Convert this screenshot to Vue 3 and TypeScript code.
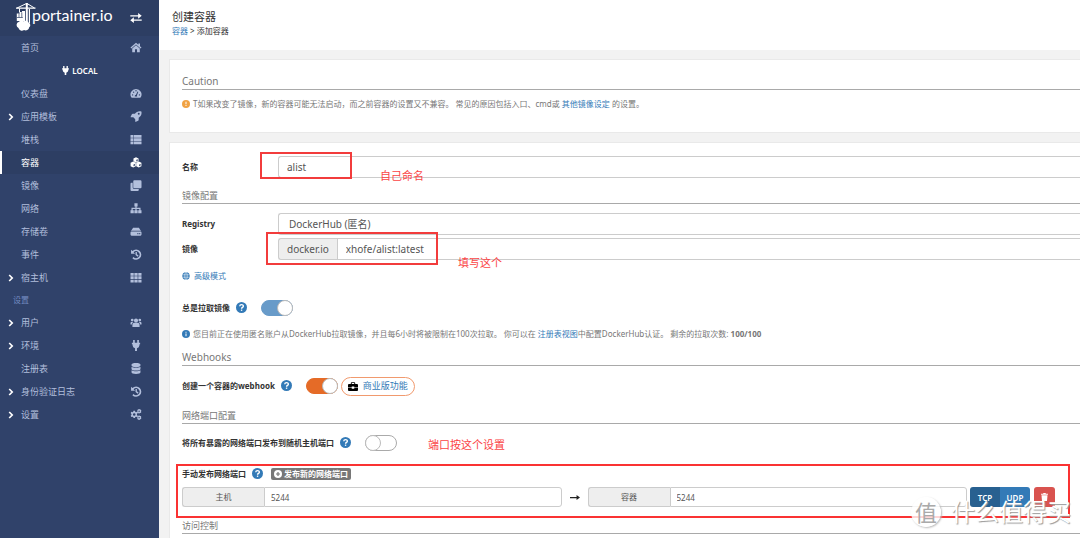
<script setup lang="ts">
import { ref } from 'vue'

interface NavItem {
  label: string
  icon?: string
  expandable?: boolean
  active?: boolean
  heading?: boolean
}

const icons: Record<string, string> = {
  home: 'M8 1 0 8l1.200 1.400L8 3.500l6.800 5.900L16 8l-2.200-1.900V2h-2.300v2.100zM8 4.700 2.500 9.500V15h4v-4.500h3V15h4V9.500z',
  gauge:
    'M8 1.500a8 8 0 0 0-6.900 12.100c.2.3.5.4.8.4h12.200c.3 0 .6-.1.8-.4A8 8 0 0 0 8 1.500zM8 3a1 1 0 1 1 0 2 1 1 0 0 1 0-2zM3 11a1 1 0 1 1 0-2 1 1 0 0 1 0 2zm1.500-4a1 1 0 1 1 0-2 1 1 0 0 1 0 2zm6.800-1.100-2 4.900c.4.4.4 1 .3 1.700H6.300c-.4-1.200.4-2.200 1.500-2.300l2.300-4.800c.3-.6 1.400-.1 1.200.5zM13 11a1 1 0 1 1 0-2 1 1 0 0 1 0 2z',
  rocket:
    'M15.800.6c-4-1.100-7.200.4-9.400 3.500H3.200c-.5 0-1 .3-1.200.7L.2 8.300c-.2.5 0 .8.5.8h3.400l2.800 2.800v3.300c0 .6.5.8.9.6l3.400-1.800c.5-.2.7-.6.7-1.100V9.700c3.100-2.200 4.900-5.100 3.900-9.100zM12 5.500a1.400 1.400 0 1 1 0-2.800 1.400 1.400 0 0 1 0 2.800z',
  list: 'M0 1.500h4v4H0zM4.700 1.500H16v4H4.700zM0 6.200h4v4H0zM4.700 6.200H16v4H4.700zM0 10.900h4v4H0zM4.700 10.900H16v4H4.700z',
  cubes:
    'M8 .3 4.300 2v4.200L8 8l3.700-1.800V2zM3.900 6.700.1 8.500v4.800l3.800 1.900 3.800-1.900V8.500zM12.100 6.700 8.300 8.500v4.800l3.800 1.900 3.800-1.900V8.500zM8.500 6.500V4l2-.9v2.400zM4.400 13.500V11l2.100-1v2.500zM12.600 13.500V11l2.100-1v2.500z',
  clone: 'M5.500.5h9A1.500 1.500 0 0 1 16 2v8.500a1.500 1.500 0 0 1-1.500 1.500h-9A1.500 1.500 0 0 1 4 10.500V2A1.500 1.500 0 0 1 5.500.5zM3.200 4v7a2 2 0 0 0 2 2H12v1.500a1.500 1.500 0 0 1-1.500 1.500h-9A1.500 1.500 0 0 1 0 14.500v-9A1.500 1.500 0 0 1 1.500 4z',
  sitemap: 'M5.700.5h4.600v4.600H8.900V7h5.700v3.500H16V15h-4.800v-4.500h1.600V8.700H8.900v1.800h1.500V15H5.600v-4.500h1.500V8.700H3.200v1.800h1.600V15H0v-4.500h1.400V7h5.700V5.100H5.700z',
  drive:
    'M3.800 2.500h8.400L15.500 7.500A3 3 0 0 0 14 7H2a3 3 0 0 0-1.500.5zM1.500 8h13A1.500 1.500 0 0 1 16 9.500v3a1.500 1.500 0 0 1-1.500 1.500h-13A1.500 1.500 0 0 1 0 12.500v-3A1.500 1.500 0 0 1 1.500 8zM10 10v2h1.500v-2zm2.700 0v2h1.500v-2z',
  history:
    'M.8 1v5.800h5.800L4.500 4.700A5 5 0 1 1 4.300 11.500l-1.600 1.800A7.500 7.500 0 1 0 2.800 3zM7.300 4.300h2v3.500l2.400 1.800-1.200 1.600-3.200-2.400z',
  grid: 'M0 1.500h4.700v4H0zM5.600 1.500h4.800v4H5.600zM11.300 1.500H16v4h-4.700zM0 6.300h4.700v4H0zM5.600 6.300h4.800v4H5.600zM11.300 6.300H16v4h-4.700zM0 11.100h4.700v4H0zM5.600 11.100h4.800v4H5.600zM11.300 11.100H16v4h-4.700z',
  users:
    'M8 2a3 3 0 1 1 0 6 3 3 0 0 1 0-6zM2.500 2.500a2 2 0 1 1 0 4 2 2 0 0 1 0-4zM13.500 2.500a2 2 0 1 1 0 4 2 2 0 0 1 0-4zM5.500 8.500h5c1.500 0 2.700 1.200 2.700 2.700V14.500H2.800v-3.300c0-1.500 1.200-2.700 2.700-2.700zM1.500 7.200h2.800C2.700 8.200 2 9.300 2 11H0V8.800c0-.9.6-1.600 1.500-1.600zM14.500 7.200h-2.800c1.600 1 2.300 2.100 2.300 3.800h2V8.800c0-.9-.6-1.600-1.500-1.600z',
  plug: 'M3.800 0h2.400v4h3.600V0h2.400v4H14v2.200h-1v1.300a4.800 4.800 0 0 1-3.600 4.400V16H6.600v-4.100A4.800 4.800 0 0 1 3 7.500V6.200H2V4h1.800z',
  database:
    'M8 0c3.900 0 6.500 1 6.500 2.300v1.400C14.500 5 11.900 6 8 6S1.500 5 1.500 3.700V2.300C1.500 1 4.100 0 8 0zM1.500 5.600C3 6.600 5.300 7 8 7s5-.4 6.500-1.400v3C14.500 9.900 11.900 11 8 11S1.500 9.900 1.500 8.600zM1.500 10.600C3 11.600 5.300 12 8 12s5-.4 6.500-1.400v3C14.500 15 11.900 16 8 16s-6.500-1-6.500-2.400z',
  cogs: 'M4.300 2.500h2.200l.4 1.600 1 .5 1.600-.5 1 1.800-1.100 1.200v1.500l1.100 1.200-1 1.800-1.600-.5-1 .5-.4 1.600H4.300l-.4-1.600-1-.5-1.600.5-1-1.800 1.100-1.200V7.100L.3 5.900l1-1.800 1.600.5 1-.5zM5.400 6a1.900 1.900 0 1 0 0 3.800 1.900 1.900 0 0 0 0-3.800zM13.200 0l.5 1 1.200-.1.900 1.400-.6 1 .6 1-.9 1.400-1.200-.1-.5 1h-1.500l-.5-1-1.200.1V1l1.200.1.500-1.100zM12.500 2.300a1 1 0 1 0 0 2 1 1 0 0 0 0-2zM13.200 9.300l.5 1 1.200-.1.900 1.400-.6 1 .6 1-.9 1.400-1.200-.1-.5 1h-1.500l-.5-1-1.200.1v-4.700l1.200.1.500-1.100zM12.500 11.600a1 1 0 1 0 0 2 1 1 0 0 0 0-2z',
}

const nav: NavItem[] = [
  { label: '仪表盘', icon: 'gauge' },
  { label: '应用模板', icon: 'rocket', expandable: true },
  { label: '堆栈', icon: 'list' },
  { label: '容器', icon: 'cubes', active: true },
  { label: '镜像', icon: 'clone' },
  { label: '网络', icon: 'sitemap' },
  { label: '存储卷', icon: 'drive' },
  { label: '事件', icon: 'history' },
  { label: '宿主机', icon: 'grid', expandable: true },
  { label: '设置', heading: true },
  { label: '用户', icon: 'users', expandable: true },
  { label: '环境', icon: 'plug', expandable: true },
  { label: '注册表', icon: 'database' },
  { label: '身份验证日志', icon: 'history', expandable: true },
  { label: '设置', icon: 'cogs', expandable: true },
]

const name = ref('alist')
const registry = ref('hub')
const image = ref('xhofe/alist:latest')
const alwaysPull = ref(true)
const webhook = ref(true)
const publishAll = ref(false)
const hostPort = ref('5244')
const containerPort = ref('5244')
</script>

<template>
  <div class="shell">
    <aside class="sidebar">
      <div class="brand">
        <a class="logo" href="#" aria-label="portainer.io">
          <svg class="crane" viewBox="0 0 20 28" aria-hidden="true">
            <path d="M9.800 0h2v20h-2zM0 4.500h19.500v1.300H0zM12.800 6h1.200v14h-1.200z" />
            <path d="M10.500.5 1 5M11 .5 18.500 5M3.500 5.500v4" fill="none" stroke="currentColor" stroke-width="1" />
            <path d="M.8 10.500h3V9h2v1.500H6V8h3v10H.8z" />
            <path d="M3 10.500v4M5.800 9.500v5M.8 14.500h6" stroke="#2d3e63" stroke-width=".7" />
            <path d="M3 18.800a3 3 0 0 1 4.500-.6 3.500 3.500 0 0 1 5 1.300 2.800 2.800 0 0 1 .7 4.800 3.500 3.500 0 0 1-5.200 2.700 3.500 3.500 0 0 1-5.500-2 3.300 3.300 0 0 1 .5-6.200z" />
          </svg>
          <span>portainer.io</span>
        </a>
        <button class="swap" type="button" aria-label="切换">
          <svg viewBox="0 0 16 14"><path d="M0 3h11V0l5 4-5 4V5H0zM16 9H5V6L0 10l5 4v-3h11z" /></svg>
        </button>
      </div>
      <nav>
        <a class="item" href="#">
          <span class="chevron"></span>
          <span class="text">首页</span>
          <svg class="icon" viewBox="0 0 16 16"><path :d="icons.home" fill-rule="evenodd" /></svg>
        </a>
        <div class="endpoint">
          <svg viewBox="0 0 16 16"><path :d="icons.plug" /></svg>
          <span>LOCAL</span>
        </div>
        <template v-for="(item, i) in nav" :key="i">
          <div v-if="item.heading" class="heading">{{ item.label }}</div>
          <a v-else class="item" :class="{ active: item.active }" href="#">
            <span class="chevron">
              <svg v-if="item.expandable" viewBox="0 0 6 8">
                <path d="M1.200 1 4.200 4l-3 3" fill="none" stroke="#fff" stroke-width="1.700" />
              </svg>
            </span>
            <span class="text">{{ item.label }}</span>
            <svg class="icon" viewBox="0 0 16 16"><path :d="icons[item.icon!]" fill-rule="evenodd" /></svg>
          </a>
        </template>
      </nav>
    </aside>

    <main class="main">
      <header class="page-head">
        <h1>创建容器</h1>
        <p><a href="#">容器</a> &gt; 添加容器</p>
      </header>

      <section class="panel caution">
        <h2 class="latin">Caution</h2>
        <p class="note">
          <svg class="dot warn" viewBox="0 0 16 16"><circle cx="8" cy="8" r="8" /><path d="M7 3.500h2v5H7zM7 10h2v2.200H7z" fill="#fff" /></svg>
          <span>T如果改变了镜像，新的容器可能无法启动，而之前容器的设置又不兼容。 常见的原因包括入口、cmd或 <a href="#">其他镜像设定</a> 的设置。</span>
        </p>
      </section>

      <section class="panel form">
        <div class="field">
          <label for="name">名称</label>
          <div class="control marked name-mark">
            <input id="name" v-model="name" class="box" type="text" />
            <span class="remark">自己命名</span>
          </div>
        </div>

        <h2>镜像配置</h2>
        <div class="field">
          <label for="registry">Registry</label>
          <div class="control">
            <select id="registry" v-model="registry" class="box">
              <option value="hub">DockerHub (匿名)</option>
            </select>
          </div>
        </div>
        <div class="field image-field">
          <label for="image">镜像</label>
          <div class="control marked image-mark">
            <span class="addon">docker.io</span>
            <input id="image" v-model="image" class="box joined" type="text" />
            <span class="remark">填写这个</span>
          </div>
        </div>

        <a class="advanced" href="#">
          <svg viewBox="0 0 16 16">
            <circle cx="8" cy="8" r="7.500" fill="currentColor" />
            <path d="M0 5.500h16M0 10.500h16M8 0v16M8 .5C3.500 4 3.500 12 8 15.500M8 .5c4.500 3.500 4.500 11.500 0 15" fill="none" stroke="#fff" stroke-width=".9" />
          </svg>
          高级模式
        </a>

        <div class="line pull">
          <label for="pull">总是拉取镜像</label>
          <svg class="help" viewBox="0 0 16 16"><circle cx="8" cy="8" r="8" /><path d="M5.400 6.200C5.600 3 10.700 3 10.700 6c0 1.900-2.600 1.800-2.600 3.700" /><path d="M8.100 11v1.900" /></svg>
          <input id="pull" v-model="alwaysPull" class="toggle" type="checkbox" />
        </div>

        <p class="note limits">
          <svg class="dot" viewBox="0 0 16 16"><circle cx="8" cy="8" r="8" /><path d="M7 3.500h2v2.200H7zM7 7h2v5.500H7z" fill="#fff" /></svg>
          <span>您目前正在使用匿名账户从DockerHub拉取镜像，并且每6小时将被限制在100次拉取。 你可以在 <a href="#">注册表视图</a>中配置DockerHub认证。 剩余的拉取次数: <b>100/100</b></span>
        </p>

        <h2 class="latin">Webhooks</h2>
        <div class="line hook">
          <label for="hook">创建一个容器的webhook</label>
          <svg class="help" viewBox="0 0 16 16"><circle cx="8" cy="8" r="8" /><path d="M5.400 6.200C5.600 3 10.700 3 10.700 6c0 1.900-2.600 1.800-2.600 3.700" /><path d="M8.100 11v1.900" /></svg>
          <input id="hook" v-model="webhook" class="toggle orange" type="checkbox" />
          <a class="pill" href="#">
            <svg viewBox="0 0 16 14"><path d="M4.500 3V1.500C4.500.6 5.100 0 6 0h4c.9 0 1.500.6 1.500 1.500V3h3A1.500 1.500 0 0 1 16 4.500V8h-6V7H6v1H0V4.500A1.500 1.500 0 0 1 1.500 3zM6 3h4V1.500H6zM0 9h6v1.500h4V9h6v3.500a1.500 1.500 0 0 1-1.500 1.500h-13A1.500 1.500 0 0 1 0 12.500z" fill-rule="evenodd" /></svg>
            商业版功能
          </a>
        </div>

        <h2>网络端口配置</h2>
        <div class="line expose">
          <label for="expose">将所有暴露的网络端口发布到随机主机端口</label>
          <svg class="help" viewBox="0 0 16 16"><circle cx="8" cy="8" r="8" /><path d="M5.400 6.200C5.600 3 10.700 3 10.700 6c0 1.900-2.600 1.800-2.600 3.700" /><path d="M8.100 11v1.900" /></svg>
          <input id="expose" v-model="publishAll" class="toggle" type="checkbox" />
          <span class="remark-inline">端口按这个设置</span>
        </div>

        <div class="ports">
          <div class="line">
            <span class="label">手动发布网络端口</span>
            <svg class="help" viewBox="0 0 16 16"><circle cx="8" cy="8" r="8" /><path d="M5.400 6.200C5.600 3 10.700 3 10.700 6c0 1.900-2.600 1.800-2.600 3.700" /><path d="M8.100 11v1.900" /></svg>
            <button class="publish" type="button">
              <svg viewBox="0 0 16 16"><circle cx="8" cy="8" r="8" fill="#fff" /><path d="M8 4v8M4 8h8" stroke="#777" stroke-width="2.400" /></svg>
              发布新的网络端口
            </button>
          </div>
          <div class="mapping">
            <div class="port">
              <label class="addon" for="host">主机</label>
              <input id="host" v-model="hostPort" class="box joined" type="text" />
            </div>
            <svg class="arrow" viewBox="0 0 16 10"><path d="M0 4h10.500V1L16 5l-5.500 4V6H0z" /></svg>
            <div class="port">
              <label class="addon" for="target">容器</label>
              <input id="target" v-model="containerPort" class="box joined" type="text" />
            </div>
            <div class="protocol">
              <button class="tcp" type="button">TCP</button><button type="button">UDP</button>
            </div>
            <button class="remove" type="button" aria-label="删除">
              <svg viewBox="0 0 14 16"><path d="M0 1.500h4L5 0h4l1 1.500h4v2H0zM1 4.500h12L12 16H2z" /></svg>
            </button>
          </div>
        </div>

        <h2>访问控制</h2>
      </section>
    </main>

    <div class="watermark"><span class="seal">值</span><span>什么值得买</span></div>
  </div>
</template>

<style>
body {
  margin: 0;
  background: #f2f2f2;
}
</style>

<style scoped>
.shell {
  display: flex;
  position: relative;
  min-height: 100vh;
  overflow: hidden;
  font-family: 'Noto Sans', 'Noto Sans CJK SC', sans-serif;
  font-size: 8px;
  line-height: 16px;
  color: #777;
}
.shell *,
.shell *::before,
.shell *::after {
  box-sizing: border-box;
}
a {
  color: #337ab7;
  text-decoration: none;
}
h1,
h2,
p {
  margin: 0;
  font-weight: 400;
}
button,
input,
select {
  margin: 0;
  font-family: inherit;
}
svg {
  display: block;
  flex: none;
  fill: currentColor;
}

.sidebar {
  flex: none;
  width: 159px;
  background: #30426a;
}
.brand {
  display: flex;
  align-items: center;
  justify-content: space-between;
  height: 36px;
  padding: 0 17px 0 16px;
  background: #2d3e63;
}
.logo {
  display: flex;
  align-items: center;
  color: #fff;
  font: 16px/20px Lato, sans-serif;
}
.logo span {
  padding-bottom: 6px;
}
.crane {
  width: 20px;
  height: 28px;
  margin-top: -3px;
  margin-right: -4px;
}
.swap {
  padding: 0;
  border: 0;
  background: none;
  color: #fff;
}
.swap svg {
  width: 12px;
  height: 10px;
}
.item {
  display: flex;
  align-items: center;
  height: 23px;
  padding-right: 17px;
  border-left: 2px solid transparent;
  color: #b2bfdc;
  font-size: 9px;
}
.item.active {
  border-color: #fff;
  background: #2d3e63;
  color: #fff;
}
.chevron {
  width: 19px;
  padding-left: 6px;
}
.chevron svg {
  width: 6px;
  height: 8px;
}
.text {
  flex: 1;
}
.icon {
  width: 12px;
  height: 11px;
}
.endpoint {
  display: flex;
  align-items: center;
  justify-content: center;
  gap: 2px;
  height: 23px;
  color: #fff;
  font-size: 8px;
  font-weight: 600;
}
.endpoint svg {
  width: 9px;
  height: 9px;
}
.heading {
  height: 22px;
  padding-left: 13px;
  line-height: 22px;
  color: #738bc0;
}

.main {
  display: flex;
  flex: 1;
  flex-direction: column;
  min-width: 0;
}
.page-head {
  height: 50px;
  padding: 9px 13px 0;
  background: #fff;
  color: #333;
}
.page-head h1 {
  font-size: 11px;
  line-height: 16px;
}
.page-head p {
  line-height: 12px;
}
.panel {
  margin-left: 10px;
  padding-left: 12px;
  border: 1px solid #e9e9e9;
  border-right: 0;
  background: #fff;
}
.caution {
  margin-top: 9px;
  padding-top: 14px;
  padding-bottom: 20px;
}
.form {
  flex: 1;
  margin-top: 9px;
  padding-top: 13px;
  border-bottom: 0;
}
.panel h2 {
  height: 16px;
  margin-top: 10px;
  border-bottom: 1px solid #a9a9a9;
  font-size: 9px;
  line-height: 15px;
}
.panel .latin {
  font-size: 10px;
}
.panel.caution h2 {
  margin-top: 0;
}
.note {
  display: flex;
  align-items: center;
  gap: 3px;
  white-space: nowrap;
}
.caution .note {
  margin-top: 6px;
}
.dot {
  width: 8px;
  height: 8px;
  color: #337ab7;
}
.dot.warn {
  color: #f0a243;
}

.field {
  display: flex;
  align-items: center;
}
h2 + .field {
  margin-top: 9px;
}
.image-field {
  margin-top: 3px;
}
.field > label {
  width: 96px;
}
label,
.label {
  color: #333;
  font-weight: 700;
}
.control {
  display: flex;
  flex: 1;
  position: relative;
}
.box {
  flex: 1;
  min-width: 0;
  height: 22px;
  padding: 0 8px;
  border: 1px solid #ccc;
  border-right: 0;
  border-radius: 3px 0 0 3px;
  outline: 0;
  appearance: none;
  background: #fff;
  color: #555;
  font-size: 10px;
}
select.box {
  padding-left: 10px;
}
.box.joined {
  border-radius: 0;
}
.addon {
  flex: none;
  padding: 0 8px;
  border: 1px solid #ccc;
  border-right-width: 0;
  border-radius: 3px 0 0 3px;
  background: #eee;
  color: #555;
  font-size: 10px;
  font-weight: 400;
  line-height: 20px;
}
.marked::after {
  content: '';
  position: absolute;
  border: 2px solid #f23c3c;
  pointer-events: none;
}
.name-mark::after {
  top: -4px;
  left: -18px;
  width: 92px;
  height: 27px;
}
.image-mark::after {
  top: -6px;
  left: -12px;
  width: 172px;
  height: 33px;
}
.remark {
  position: absolute;
  top: 12px;
  left: 102px;
  color: #fb4444;
  font-size: 11px;
}
.image-mark .remark {
  top: 17px;
  left: 180px;
}

.advanced {
  display: flex;
  align-items: center;
  gap: 4px;
  width: max-content;
  margin-top: 8px;
}
.advanced svg {
  width: 8px;
  height: 8px;
}
.line {
  display: flex;
  align-items: center;
  height: 16px;
}
.help {
  width: 11px;
  height: 11px;
  margin: 0 14px 2px 6px;
  color: #337ab7;
}
.help path {
  fill: none;
  stroke: #fff;
  stroke-width: 2;
}
.toggle {
  flex: none;
  width: 32px;
  height: 16px;
  border: 1px solid #aaa;
  border-radius: 8px;
  appearance: none;
  background: #fff;
}
.toggle::before {
  content: '';
  display: block;
  width: 16px;
  height: 16px;
  margin: -1px;
  border: 1px solid #bbb;
  border-radius: 8px;
  background: #fff;
}
.toggle:checked {
  border-color: #689bc9;
  background: #689bc9;
}
.toggle:checked::before {
  margin-left: 15px;
}
.toggle.orange:checked {
  border-color: #e56b27;
  background: #e56b27;
}
.pull {
  margin-top: 16px;
}
.limits {
  margin-top: 10px;
}
.panel .limits + h2 {
  margin-top: 8px;
}
.hook {
  height: 20px;
  margin-top: 10px;
}
.pill {
  display: flex;
  align-items: center;
  gap: 5px;
  height: 19px;
  margin-left: 3px;
  padding: 0 6px;
  border: 1px solid #f19a6e;
  border-radius: 10px;
  font-size: 9px;
}
.pill svg {
  width: 10px;
  height: 9px;
  color: #000;
}
.panel .hook + h2 {
  margin-top: 12px;
}
.expose {
  margin-top: 11px;
}
.remark-inline {
  margin-left: 31px;
  padding-top: 4px;
  color: #fb4444;
  font-size: 11px;
}

.ports {
  position: relative;
  margin-top: 15px;
  padding-right: 25px;
}
.ports::after {
  content: '';
  position: absolute;
  inset: -2px 10px -11px -6px;
  border: 2px solid #fa3232;
  pointer-events: none;
}
.ports .help {
  margin-right: 8px;
}
.publish {
  display: flex;
  align-items: center;
  gap: 2px;
  height: 12px;
  padding: 0 3px;
  border: 0;
  border-radius: 2px;
  background: #777;
  color: #fff;
  font-size: 8px;
  font-weight: 700;
  line-height: 12px;
}
.publish svg {
  width: 8px;
  height: 8px;
}
.mapping {
  display: flex;
  align-items: center;
  margin-top: 5px;
}
.port {
  display: flex;
  flex: 1;
  min-width: 0;
}
.port .addon {
  width: 82px;
  font-size: 8px;
  line-height: 18px;
  text-align: center;
}
.port .box {
  height: 20px;
  padding: 0 6px;
  border-right: 1px solid #ccc;
  border-radius: 0 3px 3px 0;
  font-size: 8px;
}
.arrow {
  width: 10px;
  height: 7px;
  margin: 0 8px;
  color: #222;
}
.protocol {
  display: flex;
  margin: 0 4px 0 3px;
  border-radius: 3px;
  overflow: hidden;
}
.protocol button {
  width: 30px;
  height: 20px;
  padding: 0;
  border: 0;
  background: #337ab7;
  color: #fff;
  font-size: 8px;
  font-weight: 600;
}
.protocol .tcp {
  background: #286090;
}
.remove {
  display: grid;
  place-items: center;
  width: 21px;
  height: 20px;
  padding: 0;
  border: 0;
  border-radius: 3px;
  background: #d9534f;
  color: #fff;
}
.remove svg {
  width: 7px;
  height: 8px;
}
.panel .ports + h2 {
  margin-top: 11px;
}

.watermark {
  display: flex;
  position: absolute;
  right: 9px;
  bottom: 10px;
  align-items: center;
  gap: 10px;
  color: #fff;
  font-size: 24px;
  line-height: 32px;
  text-shadow: 1px 1px 1px #999;
  pointer-events: none;
}
.seal {
  width: 30px;
  height: 30px;
  border-radius: 15px;
  background: rgba(255, 255, 255, 0.8);
  box-shadow: 1px 1px 2px #bbb;
  color: #aaa;
  font-size: 22px;
  line-height: 30px;
  text-align: center;
  text-shadow: none;
}
</style>
